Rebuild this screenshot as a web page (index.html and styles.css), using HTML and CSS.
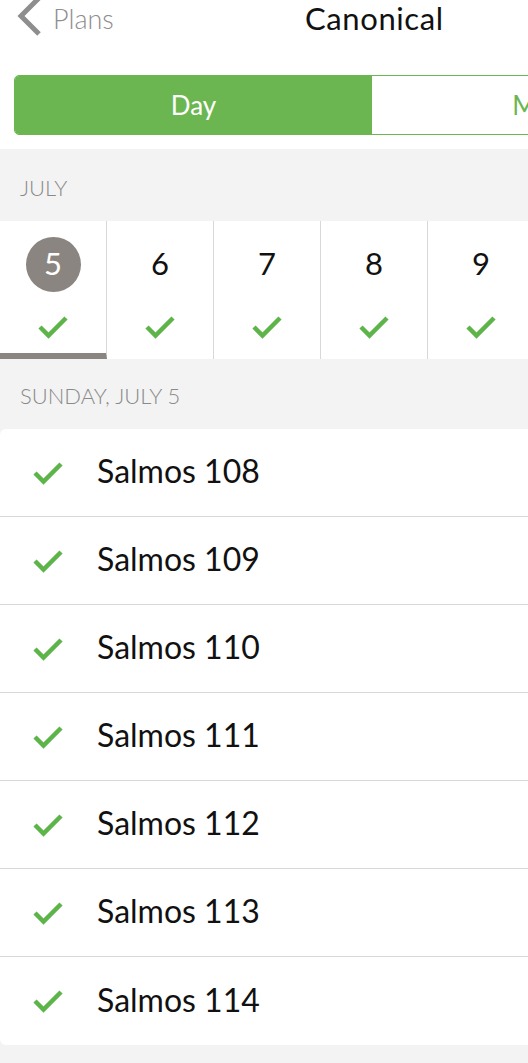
FILE: index.html
```html
<!DOCTYPE html>
<html lang="en">
<head>
<meta charset="UTF-8">
<meta name="viewport" content="width=device-width, initial-scale=1.0">
<title>Canonical</title>
<link rel="stylesheet" href="styles.css">
</head>
<body>

<div class="header">
    <div class="navbar">
        <a class="back">
            <svg class="chevron" width="28" height="40" viewBox="0 0 28 40"><polyline points="24,2 6,20 24,38" fill="none" stroke="#8e8e8e" stroke-width="5"/></svg>
            <span>Plans</span>
        </a>
        <h1 class="title">Canonical</h1>
    </div>
    <div class="segmented">
        <div class="segment active">Day</div>
        <div class="segment">Month</div>
    </div>
</div>

<div class="section-label month-label">JULY</div>

<div class="days">
    <div class="day selected">
        <span class="num">5</span>
        <svg class="check" width="31" height="24" viewBox="0 0 31 24"><polyline points="2,12 10.5,20.5 28,3" fill="none" stroke="#5db54a" stroke-width="4.5"/></svg>
    </div>
    <div class="day">
        <span class="num">6</span>
        <svg class="check" width="31" height="24" viewBox="0 0 31 24"><polyline points="2,12 10.5,20.5 28,3" fill="none" stroke="#5db54a" stroke-width="4.5"/></svg>
    </div>
    <div class="day">
        <span class="num">7</span>
        <svg class="check" width="31" height="24" viewBox="0 0 31 24"><polyline points="2,12 10.5,20.5 28,3" fill="none" stroke="#5db54a" stroke-width="4.5"/></svg>
    </div>
    <div class="day">
        <span class="num">8</span>
        <svg class="check" width="31" height="24" viewBox="0 0 31 24"><polyline points="2,12 10.5,20.5 28,3" fill="none" stroke="#5db54a" stroke-width="4.5"/></svg>
    </div>
    <div class="day">
        <span class="num">9</span>
        <svg class="check" width="31" height="24" viewBox="0 0 31 24"><polyline points="2,12 10.5,20.5 28,3" fill="none" stroke="#5db54a" stroke-width="4.5"/></svg>
    </div>
</div>

<div class="section-label date-label">SUNDAY, JULY 5</div>

<ul class="readings">
    <li><svg class="check" width="31" height="24" viewBox="0 0 31 24"><polyline points="2,12 10.5,20.5 28,3" fill="none" stroke="#5db54a" stroke-width="4.5"/></svg><span>Salmos 108</span></li>
    <li><svg class="check" width="31" height="24" viewBox="0 0 31 24"><polyline points="2,12 10.5,20.5 28,3" fill="none" stroke="#5db54a" stroke-width="4.5"/></svg><span>Salmos 109</span></li>
    <li><svg class="check" width="31" height="24" viewBox="0 0 31 24"><polyline points="2,12 10.5,20.5 28,3" fill="none" stroke="#5db54a" stroke-width="4.5"/></svg><span>Salmos 110</span></li>
    <li><svg class="check" width="31" height="24" viewBox="0 0 31 24"><polyline points="2,12 10.5,20.5 28,3" fill="none" stroke="#5db54a" stroke-width="4.5"/></svg><span>Salmos 111</span></li>
    <li><svg class="check" width="31" height="24" viewBox="0 0 31 24"><polyline points="2,12 10.5,20.5 28,3" fill="none" stroke="#5db54a" stroke-width="4.5"/></svg><span>Salmos 112</span></li>
    <li><svg class="check" width="31" height="24" viewBox="0 0 31 24"><polyline points="2,12 10.5,20.5 28,3" fill="none" stroke="#5db54a" stroke-width="4.5"/></svg><span>Salmos 113</span></li>
    <li><svg class="check" width="31" height="24" viewBox="0 0 31 24"><polyline points="2,12 10.5,20.5 28,3" fill="none" stroke="#5db54a" stroke-width="4.5"/></svg><span>Salmos 114</span></li>
</ul>

</body>
</html>
```

FILE: styles.css
```css
body {
    font-family: Lato, "Noto Sans", sans-serif;
    background-color: #f3f3f3;
    margin: 0;
    padding: 0;
    overflow: hidden;
}
.header {
    background-color: #fff;
    height: 149px;
    overflow: hidden;
}
.navbar {
    height: 40px;
    position: relative;
}
.back {
    display: flex;
    align-items: center;
    gap: 10px;
    padding-left: 15px;
    height: 37px;
    color: #8e8e8e;
    font-size: 27px;
    font-weight: 300;
}
.chevron {
    margin-top: -6px;
}
.title {
    position: absolute;
    top: 0;
    left: 305px;
    margin: 0;
    font-size: 31px;
    font-weight: normal;
    letter-spacing: 0.6px;
    line-height: 36px;
    color: #111;
}
.segmented {
    display: flex;
    margin: 35px 0 0 14px;
    width: 716px;
    height: 60px;
    border: 1px solid #6bb651;
    border-radius: 5px;
    box-sizing: border-box;
    overflow: hidden;
}
.segment {
    flex: 1;
    display: flex;
    align-items: center;
    justify-content: center;
    font-size: 26px;
    color: #6bb651;
}
.segment.active {
    background-color: #6bb651;
    color: #fff;
}
.section-label {
    color: #8a8a8a;
    font-size: 22px;
    font-weight: 300;
    padding-left: 20px;
    display: flex;
    align-items: center;
}
.month-label {
    height: 72px;
    padding-top: 4px;
    box-sizing: border-box;
}
.date-label {
    height: 70px;
    padding-top: 2px;
    box-sizing: border-box;
}
.days {
    display: flex;
    background-color: #fff;
    height: 138px;
    width: 640px;
}
.day {
    width: 107px;
    flex-shrink: 0;
    border-right: 1px solid #d8d8d8;
    box-sizing: border-box;
    display: flex;
    flex-direction: column;
    align-items: center;
    padding-top: 16px;
}
.day .num {
    width: 55px;
    height: 55px;
    border-radius: 50%;
    display: flex;
    align-items: center;
    justify-content: center;
    font-size: 31px;
    color: #111;
    padding-bottom: 4px;
    box-sizing: border-box;
}
.day .check {
    margin-top: 23px;
}
.day.selected {
    border-bottom: 6px solid #8a8580;
}
.day.selected .num {
    background-color: #8a8580;
    color: #fff;
}
.readings {
    list-style: none;
    margin: 0;
    padding: 0;
    background-color: #fff;
    border-radius: 6px 0 0 6px;
}
.readings li {
    height: 88px;
    display: flex;
    align-items: center;
    border-bottom: 1px solid #d8d8d8;
    box-sizing: border-box;
    font-size: 32px;
    color: #111;
}
.readings li span {
    margin-bottom: 4px;
}
.readings li:last-child {
    border-bottom: none;
}
.readings .check {
    margin-left: 33px;
    margin-right: 33px;
}
```
